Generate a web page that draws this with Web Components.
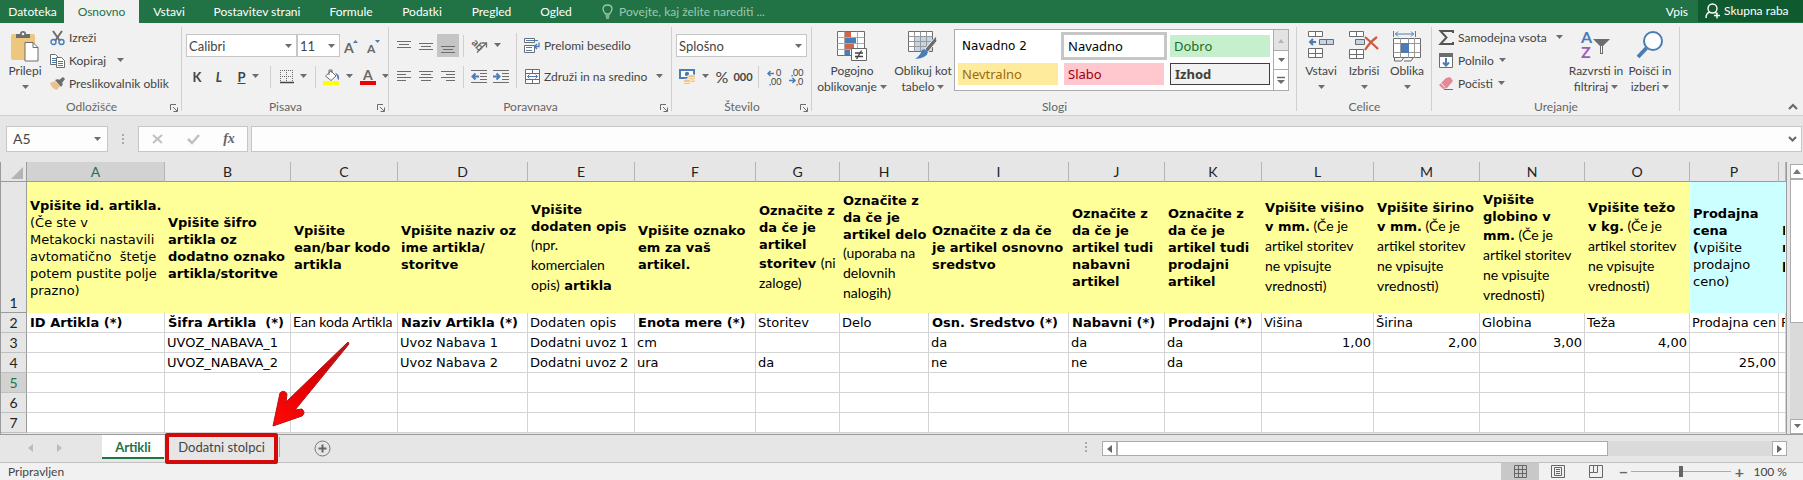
<!DOCTYPE html>
<html lang="sl">
<head>
<meta charset="utf-8">
<title>Artikli</title>
<style>
html,body{margin:0;height:100%}
body{font:12px/16px Lato,"Noto Sans",sans-serif;color:#444;background:#e6e6e6;overflow:hidden}
</style>
</head>
<body>
<sheet-app></sheet-app>
<script>
const G='#6d6d6d',B='#4a7db5';
const lines=(w,a)=>a.map(([x,y,l])=>`<path d="M${x} ${y}.5h${l}" stroke="${G}"/>`).join('');
const ICONS={
 down:[8,5,`<path d="M1 0h7L4.500 4z" fill="${G}"/>`],
 up:[8,5,`<path d="M1 5h6L4 1z" fill="#b5b5b5"/>`],
 more:[10,9,`<path d="M1 1.500h8" stroke="${G}" stroke-width="1.500"/><path d="M1 4h8L5 8z" fill="${G}"/>`],
 paste:[28,31,`<rect y="3" width="24" height="26" rx="2" fill="#edc77d"/><path d="M5 7V3h4q0-3 3-3t3 3h4v4z" fill="#6d6d6d"/><circle cx="12" cy="3" r="1.300" fill="#f1f1f1"/><path d="M14 11.500h8l5 5V30H14z" fill="#fff" stroke="${G}"/><path d="M22 11.500v5h5" fill="none" stroke="${G}"/>`],
 cut:[15,16,`<path d="M3 1l7 10M12 1L5 11" stroke="${G}" stroke-width="2"/><circle cx="3.500" cy="12" r="2.500" fill="none" stroke="${B}" stroke-width="1.400"/><circle cx="11.500" cy="12" r="2.500" fill="none" stroke="${B}" stroke-width="1.400"/>`],
 copy:[15,14,`<path d="M.5.500h5l3 3v7h-8z" fill="#fff" stroke="${G}"/><path d="M2 4.500h4M2 6.500h4M2 8.500h4" stroke="${B}"/><path d="M6.500 3.500h5l3 3v7h-8z" fill="#fff" stroke="${G}"/><path d="M8 7.500h5M8 9.500h5M8 11.500h5" stroke="${B}"/>`],
 brush:[16,14,`<path d="M1 6l5-2 5 5-3 4Q3 12 1 6z" fill="#edc08a"/><path d="M6 3l3-1 1 1 4-3 2 2-3 4 1 1-2 3z" fill="${G}"/>`],
 biga:[14,14,`<path d="M9 4h5l-2.500-3z" fill="${B}"/><text x="0" y="14" font-size="14" font-weight="700" fill="#666">A</text>`],
 smalla:[14,14,`<path d="M9 1h5l-2.500 3z" fill="${B}"/><text x="1" y="14" font-size="12" font-weight="700" fill="#666">A</text>`],
 borders:[14,14,`<path d="M.5 0v13M6.500 0v13M12.500 0v13M0 .5h13M0 6.500h13" stroke="${G}" stroke-dasharray="1 1" fill="none"/><path d="M0 12.500h14" stroke="#444" stroke-width="1.500"/>`],
 fill:[17,16,`<rect y="12" width="16" height="4" fill="#ff0"/><path d="M2.500 7L8 2l5 5-5 4.500z" fill="#fff" stroke="${G}"/><path d="M6 6V1h3v3" fill="none" stroke="${G}"/><path d="M12 4q5 1 4 7-2-1-2-4z" fill="${B}"/>`],
 fontcolor:[16,16,`<rect y="12" width="16" height="4" fill="#f00000"/><text x="3" y="11" font-size="14" font-weight="700" fill="#666">A</text>`],
 vtop:[14,14,lines(14,[[0,2,14],[2,5,10],[0,8,14]])],
 vmid:[14,14,lines(14,[[0,4,14],[2,7,10],[0,10,14]])],
 vbot:[14,14,lines(14,[[0,7,14],[2,10,10],[0,13,14]])],
 hl:[14,12,lines(14,[[0,0,14],[0,3,9],[0,6,14],[0,9,9]])],
 hc:[14,12,lines(14,[[0,0,14],[2,3,10],[0,6,14],[2,9,10]])],
 hr:[14,12,lines(14,[[0,0,14],[5,3,9],[0,6,14],[5,9,9]])],
 orient:[17,15,`<text transform="rotate(45 2 6)" x="0" y="7" font-size="11" font-weight="700" fill="#666">ab</text><path d="M6 14.500L15 5.500M11 5h4.500v4.500" fill="none" stroke="${G}" stroke-width="1.300"/>`],
 outdent:[16,13,lines(16,[[0,0,16],[9,3,7],[9,6,7],[9,9,7],[0,12,16]])+`<path d="M8 6.500H2M4.500 3.500l-3 3 3 3" stroke="${B}" stroke-width="2" fill="none"/>`],
 indent:[16,13,lines(16,[[0,0,16],[9,3,7],[9,6,7],[9,9,7],[0,12,16]])+`<path d="M0 6.500h6M3.500 3.500l3 3-3 3" stroke="${B}" stroke-width="2" fill="none"/>`],
 wrap:[16,15,`<path d="M.5.500h10v4H.5zM.5 7.500h10v7H.5z" fill="#fff" stroke="${G}"/><path d="M2 2.500h12M2 9.500h6M2 12.500h6" stroke="${B}"/><path d="M15 4.500v4h-4M13 6l-2.500 2.500L13 11" stroke="${B}" stroke-width="1.300" fill="none"/>`],
 merge:[15,15,`<path d="M.5.500h14v14H.5zM.5 4.500h14M.5 10.500h14M7.500.5v4M7.500 10.500v4" fill="#fff" stroke="${G}"/><path d="M2.500 7.500h10M4.500 5.500l-2 2 2 2M10.500 5.500l2 2-2 2" stroke="${B}" fill="none"/>`],
 money:[17,16,`<path d="M1 1h14v8H1z" fill="#fff" stroke="${B}" stroke-width="2"/><circle cx="8" cy="5" r="2.200" fill="${B}"/><g fill="#edc78a" stroke="#fff" stroke-width=".7"><ellipse cx="12.500" cy="12" rx="4" ry="1.800"/><ellipse cx="12.500" cy="9.500" rx="4" ry="1.800"/><ellipse cx="12.500" cy="7.300" rx="4" ry="1.800"/><ellipse cx="8" cy="14" rx="4" ry="1.800"/><ellipse cx="8" cy="11.800" rx="4" ry="1.800"/></g>`],
 decinc:[15,16,`<path d="M7 4.500H1M3.500 2l-2.500 2.500L3.500 7" stroke="${B}" stroke-width="1.500" fill="none"/><text x="9" y="7" font-size="9" fill="#444">0</text><text x="2" y="16" font-size="9" fill="#444">,00</text>`],
 decdec:[15,16,`<path d="M0 11.500h6M3.500 9l2.500 2.500L3.500 14" stroke="${B}" stroke-width="1.500" fill="none"/><text x="2" y="7" font-size="9" fill="#444">,00</text><text x="7" y="16" font-size="9" fill="#444">,0</text>`],
 cond:[30,30,`<path d="M.5.500h27v24H.5z" fill="#fff" stroke="${G}"/><path d="M.5 6.500h27M.5 12.500h27M.5 18.500h27M7.500.5v24M20.500.5v24" stroke="#aaa"/><path d="M8 1h6v5H8zM8 13h9v5H8z" fill="#d0654a"/><path d="M8 7h11v5H8zM8 19h5v5H8z" fill="${B}"/><path d="M14.500 17.500h15v12h-15z" fill="#fff" stroke="#666"/><path d="M18 22h8M18 25.500h8M24.500 19.500l-5 8.500" stroke="#444" stroke-width="1.300"/>`],
 table:[30,29,`<path d="M.5.500h24v20H.5z" fill="#fff" stroke="${G}"/><path d="M7 6h17v14H7z" fill="#c3d6e8"/><path d="M.5 5.500h24M.5 10.500h24M.5 15.500h24M6.500.5v20M12.500.5v20M18.500.5v20" stroke="#999"/><path d="M28 5L17 18l3 3 9-11z" fill="${G}" stroke="#f1f1f1"/><path d="M14 19q4-2 6 2-1 6-13 7 5-3 7-9z" fill="${B}"/>`],
 insert:[27,28,`<path d="M.5.500h14v5H.5zM7.500.5v5M.5 17.500h14v9H.5zM7.500 17.500v9M.5 22.500h14" fill="#fff" stroke="${G}"/><path d="M11.500 8.500h14v5h-14zM18.500 8.500v5" fill="#c3d6e8" stroke="${G}"/><path d="M8 11H2M5 8l-3 3 3 3" stroke="${B}" stroke-width="2" fill="none"/>`],
 del:[30,28,`<path d="M.5.500h14v5H.5zM7.500.5v5M.5 18.500h14v9H.5zM7.500 18.500v9M.5 23.500h14" fill="#fff" stroke="${G}"/><path d="M6.500 8.500h9v5h-9z" fill="#c3d6e8" stroke="${G}"/><path d="M16 6q6 5 13 12M28 6q-7 5-12 13" stroke="#d0583c" stroke-width="2.200" fill="none"/>`],
 format:[29,31,`<path d="M.5 0v6M22.500 0v6M2 3h19M5 .5L2.500 3 5 5.500M18 .5L20.500 3 18 5.500" stroke="${B}" fill="none"/><path d="M.5 7.500h27v19H.5z" fill="#fff" stroke="${G}"/><path d="M.5 12.500h27M.5 21.500h27M7.500 7v20M15.500 7v20M21.500 7v20" stroke="#999"/><path d="M8 12h8v10H8z" fill="${B}"/><path d="M1.500 27v3h7l2-3M11 30h7l2-3" stroke="${G}" fill="none"/>`],
 sum:[15,15,`<path d="M14 3V1H1.500l6 6.500-6 6.500H14v-2" fill="none" stroke="#555" stroke-width="2"/>`],
 filldown:[14,15,`<path d="M.5.500h13v14H.5z" fill="#fff" stroke="${G}"/><path d="M0 0h14v4H0z" fill="${G}"/><path d="M7 5v7M4 9.500l3 3 3-3" stroke="${B}" stroke-width="2" fill="none"/>`],
 eraser:[15,13,`<path d="M7 1l4-1 3 4-6 7-4 1-4-4z" fill="#e58797"/><path d="M2 6l4 4.500" stroke="#f1f1f1"/><path d="M5 12.500h9" stroke="${G}"/>`],
 sort:[30,28,`<text x="0" y="12" font-size="16" font-weight="700" fill="${B}">A</text><text x="0" y="27" font-size="16" font-weight="700" fill="#9a5fb5">Z</text><path d="M12 8h17l-7 7v8h-3v-8z" fill="${G}"/><path d="M20.500 15v7" stroke="#fff"/>`],
 find:[28,28,`<circle cx="17" cy="10" r="9" fill="#fff" stroke="${B}" stroke-width="2"/><path d="M10.500 17L2 26" stroke="${B}" stroke-width="4"/>`],
 launch:[8,8,`<path d="M.5 6V.5H6M3 3l4 4M7.500 3.500v4h-4" fill="none" stroke="${G}"/>`],
 bulb:[11,15,`<path d="M3.500 10Q1 7 1 5q0-4 4.500-4T10 5q0 2-2.500 5zM3.500 12h4M4 14h3" fill="none" stroke="#9cc9ae" stroke-width="1.300"/>`],
 person:[15,16,`<circle cx="7.500" cy="5.500" r="4.500" fill="none" stroke="#fff" stroke-width="1.400"/><path d="M1 15q0-5 4-6M10 9l1.500 1.500M9 12.500h6M12 9.500v6" fill="none" stroke="#fff" stroke-width="1.400"/>`],
 collapse:[10,6,`<path d="M1 5l4-4 4 4" fill="none" stroke="#666" stroke-width="2"/>`],
 expand:[9,6,`<path d="M1 1l3.500 3.500L8 1" fill="none" stroke="#666" stroke-width="2"/>`],
 dots:[2,10,`<path d="M0 0h2v2H0zM0 4h2v2H0zM0 8h2v2H0z" fill="#aaa"/>`],
 cancel:[11,10,`<path d="M1 1l9 8M10 1L1 9" stroke="#c0c0c0" stroke-width="2"/>`],
 ok:[13,10,`<path d="M1 5l4 4 7-8" fill="none" stroke="#c0c0c0" stroke-width="2.500"/>`],
 corner:[12,12,`<path d="M12 0v12H0z" fill="#b4b4b4"/>`],
 left:[5,8,`<path d="M5 0v8L0 4z" fill="currentColor"/>`],
 right:[5,8,`<path d="M0 0v8l5-4z" fill="currentColor"/>`],
 scrup:[8,5,`<path d="M0 5h8L4 0z" fill="#777"/>`],
 plus:[17,17,`<circle cx="8.500" cy="8.500" r="7.500" fill="none" stroke="#777"/><path d="M8.500 4.500v8M4.500 8.500h8" stroke="#666" stroke-width="2"/>`],
 vgrid:[13,13,`<path d="M.5.500h12v12H.5zM.5 4.500h12M.5 8.500h12M4.500.5v12M8.500.5v12" fill="none" stroke="#666"/>`],
 vpage:[14,13,`<path d="M.5.500h13v12H.5zM3.500 2.500h7v8h-7zM5 4.500h4M5 6.500h4M5 8.500h4" fill="none" stroke="#666"/>`],
 vbreak:[14,13,`<path d="M.5.500h13v12H.5zM4.500.5v7M8.500.5v7h-4M.5 7.500h4" fill="none" stroke="#666"/>`],
 arrow:[80,88,`<defs><linearGradient id="g" x1="0" y1="1" x2="1" y2="0"><stop offset="0" stop-color="#ff0a0a"/><stop offset=".5" stop-color="#e30000"/><stop offset="1" stop-color="#b01818"/></linearGradient></defs><path d="M77 2l-62 60 1-8q-3-5-7-1L2 86l29-10q4-3 0-7l-7 1L78 4z" fill="url(#g)" stroke="#b51515" stroke-linejoin="round"/>`]
};
const define=(n,tpl,after)=>customElements.define(n,class extends HTMLElement{
 connectedCallback(){if(this.shadowRoot)return;const r=this.attachShadow({mode:'open'});const t=document.createElement('template');t.innerHTML=tpl(this);r.append(t.content.cloneNode(true));if(after)after(this,r)}
});
const at=(e,n,d='')=>e.getAttribute(n)??d;
const BTN='button{all:unset;box-sizing:border-box;cursor:default;font:inherit;color:inherit}';

define('ui-icon',e=>{const [w,h,s]=ICONS[at(e,'name')];return `<style>:host{display:block;flex:none}svg{display:block;overflow:visible}</style><svg width="${w}" height="${h}" viewBox="0 0 ${w} ${h}" aria-hidden="true">${s}</svg>`});

define('ribbon-tab',e=>`<style>:host{display:flex;flex:none;width:var(--w)}${BTN}
button{width:100%;text-align:center;color:#fff;height:23px;line-height:23px}
button[aria-selected=true]{background:#f1f1f1;color:#217346}</style><button role="tab" aria-selected="${e.hasAttribute('on')}"><slot></slot></button>`,
e=>e.style.setProperty('--w',at(e,'w')+'px'));

/* A titled ribbon section with a separator on its right. */
define('ribbon-group',e=>`<style>:host{display:grid;grid-template-rows:76px 16px;flex:none;box-sizing:border-box;width:var(--w);position:relative;color:#444}
:host::after{content:"";position:absolute;right:0;top:4px;bottom:4px;width:1px;background:#d0d0d0}
.c{display:flex;min-width:0}.l{display:flex;align-items:center;justify-content:center;color:#666;position:relative}
${BTN}button{position:absolute;right:4px;top:5px}</style>
<div class="c"><slot></slot></div><div class="l">${at(e,'label')}${e.hasAttribute('launch')?`<button aria-label="${at(e,'label')}"><ui-icon name="launch"></ui-icon></button>`:''}</div>`,
e=>e.style.setProperty('--w',at(e,'w')+'px'));

/* Large command: picture above a one- or two-line caption. */
define('big-button',e=>{const l=at(e,'label').split('|');const a='<ui-icon name="down"></ui-icon>';
return `<style>:host{display:block;flex:none;width:var(--w)}${BTN}
button{width:100%;display:flex;flex-direction:column;align-items:center;white-space:nowrap;padding-top:8px}
.i{height:32px}span{display:flex;align-items:center;gap:2px;height:16px}</style>
<button><div class="i"><ui-icon name="${at(e,'icon')}"></ui-icon></div><span>${l[0]}</span><span>${l[1]||''}${a}</span></button>`},
e=>e.style.setProperty('--w',at(e,'w')+'px'));

/* Small command: optional picture, caption and menu arrow in one line. */
define('cmd-button',e=>`<style>:host{display:flex;flex:none}${BTN}
button{display:flex;align-items:center;white-space:nowrap;height:23px;gap:4px}
.i{width:16px;display:flex;justify-content:center}.a{margin-left:var(--gap,0)}</style>
<button><span class="i"><ui-icon name="${at(e,'icon')}"></ui-icon></span><slot></slot>${e.hasAttribute('menu')?'<ui-icon class="a" name="down"></ui-icon>':''}</button>`);

define('icon-button',e=>`<style>:host{display:flex;flex:none}${BTN}
button{display:flex;align-items:center;justify-content:center;width:22px;height:23px}
:host([on]) button{background:#c5c5c5}:host([menu]) button{width:36px;gap:5px}:host([narrow]) button{width:20px}</style>
<button aria-label="${at(e,'label')}">${at(e,'icon')?`<ui-icon name="${at(e,'icon')}"></ui-icon>`:'<slot></slot>'}${e.hasAttribute('menu')?'<ui-icon name="down"></ui-icon>':''}</button>`);

define('combo-box',e=>`<style>:host{display:flex;flex:none;position:relative;width:var(--w)}
select{appearance:none;width:100%;height:23px;border:1px solid #c6c6c6;border-radius:0;background:#fff;color:#444;font:13px/20px Lato,sans-serif;padding:0 2px;outline:0;margin:0}
ui-icon{position:absolute;right:5px;top:10px;pointer-events:none}</style>
<select aria-label="${at(e,'label')}"><option>${at(e,'value')}</option></select><ui-icon name="down"></ui-icon>`,
e=>e.style.setProperty('--w',at(e,'w')+'px'));

define('v-rule',()=>`<style>:host{display:block;flex:none;width:1px;height:22px;background:#d0d0d0}</style>`);

define('style-gallery',()=>`<style>:host{display:flex;flex:none;height:62px;width:335px;box-sizing:border-box;border:1px solid #ababab;background:#fff;margin-top:6px}
${BTN}.g{flex:1;display:grid;grid-template-columns:repeat(3,100px);grid-template-rows:22px 22px;gap:6px;padding:5px 0 0 3px}
.g button{font:13px/22px "Noto Sans",sans-serif;padding-left:4px;color:#000}
.on{outline:3px solid #c6c6c6}.s{display:grid;grid-template-rows:20px 19px 21px;width:15px}
.s button{border-left:1px solid #ababab;display:flex;align-items:center;justify-content:center}.s button+button{border-top:1px solid #ababab}
.g .good{background:#c6efce;color:#1c6b1c}.g .neu{background:#ffeb9c;color:#9c6a10}.g .bad{background:#ffc7ce;color:#9c0006}.g .out{background:#f2f2f2;color:#3f3f3f;border:1px solid #3f3f3f;font-weight:700;line-height:20px}
.g .v{font:12px/22px "DejaVu Sans",sans-serif}.d{background:#e3e3e3}</style>
<div class="g"><button class="v">Navadno 2</button><button class="on">Navadno</button><button class="good">Dobro</button><button class="neu">Nevtralno</button><button class="bad">Slabo</button><button class="out">Izhod</button></div>
<div class="s"><button class="d" aria-label="Gor"><ui-icon name="up"></ui-icon></button><button aria-label="Dol"><ui-icon name="down"></ui-icon></button><button aria-label="Več"><ui-icon name="more"></ui-icon></button></div>`);

define('app-tabs',()=>`<style>:host{display:flex;height:23px;background:#217346;color:#fff;align-items:center;padding-left:1px}
${BTN}label{display:flex;align-items:center;gap:6px;margin-left:16px;flex:1}input{all:unset;flex:1;font:inherit;color:#9cc9ae}input::placeholder{color:#9cc9ae;opacity:1}
.in{margin-right:10px}.share{background:#0f5b2f;height:22px;align-self:flex-start;width:105px;display:flex;align-items:center;gap:4px;padding-left:7px}</style>
<ribbon-tab w="63">Datoteka</ribbon-tab><ribbon-tab w="75" on>Osnovno</ribbon-tab><ribbon-tab w="60">Vstavi</ribbon-tab><ribbon-tab w="116">Postavitev strani</ribbon-tab><ribbon-tab w="72">Formule</ribbon-tab><ribbon-tab w="70">Podatki</ribbon-tab><ribbon-tab w="69">Pregled</ribbon-tab><ribbon-tab w="60">Ogled</ribbon-tab>
<label><ui-icon name="bulb"></ui-icon><input aria-label="Povejte" placeholder="Povejte, kaj želite narediti ..."></label>
<button class="in">Vpis</button><button class="share"><ui-icon name="person"></ui-icon>Skupna raba</button>`);

define('app-ribbon',()=>`<style>:host{display:flex;height:92px;background:#f1f1f1;border-bottom:1px solid #d0d0d0;padding-left:1px;position:relative}
.col{display:flex;flex-direction:column}.row{display:flex;align-items:center;height:23px}.three{padding:3px 0 0 8px}
.two{gap:8px;padding:11px 0 0 4px}.b{font:700 13px/16px Lato,sans-serif}.i{font-style:italic}.u{text-decoration:underline}
v-rule{margin:0 4px}.tall{height:55px;margin:10px 7px 0 4px}${BTN}.end{position:absolute;right:5px;bottom:5px}
.flush{padding-left:0}.sums{padding-left:6px;width:134px;box-sizing:border-box}.pct{font-size:16px}.tho{font:700 11px/16px Lato,sans-serif}</style>
<ribbon-group w="181" label="Odložišče" launch><big-button w="48" icon="paste" label="Prilepi"></big-button>
<div class="col three flush"><cmd-button icon="cut">Izreži</cmd-button><cmd-button icon="copy" menu style="--gap:6px">Kopiraj</cmd-button><cmd-button icon="brush">Preslikovalnik oblik</cmd-button></div></ribbon-group>
<ribbon-group w="207" label="Pisava" launch><div class="col two">
<div class="row"><combo-box w="111" label="Pisava" value="Calibri"></combo-box><combo-box w="43" label="Velikost" value="11"></combo-box><icon-button icon="biga" label="Povečaj"></icon-button><icon-button icon="smalla" label="Pomanjšaj"></icon-button></div>
<div class="row"><icon-button label="Krepko"><span class="b">K</span></icon-button><icon-button label="Ležeče"><span class="b i">L</span></icon-button><icon-button menu label="Podčrtano"><span class="b u">P</span></icon-button><v-rule></v-rule><icon-button icon="borders" menu label="Obrobe"></icon-button><v-rule></v-rule><icon-button icon="fill" menu label="Polnilo"></icon-button><icon-button icon="fontcolor" menu label="Barva"></icon-button></div></div></ribbon-group>
<ribbon-group w="283" label="Poravnava" launch><div class="col two">
<div class="row"><icon-button icon="vtop" label="Zgoraj"></icon-button><icon-button icon="vmid" label="Sredina"></icon-button><icon-button icon="vbot" on label="Spodaj"></icon-button><v-rule></v-rule><icon-button icon="orient" menu label="Usmerjenost"></icon-button></div>
<div class="row"><icon-button icon="hl" label="Levo"></icon-button><icon-button icon="hc" label="Središče"></icon-button><icon-button icon="hr" label="Desno"></icon-button><v-rule></v-rule><icon-button icon="outdent" label="Manj zamika"></icon-button><icon-button icon="indent" label="Več zamika"></icon-button></div></div>
<v-rule class="tall"></v-rule>
<div class="col two flush"><cmd-button icon="wrap">Prelomi besedilo</cmd-button><cmd-button icon="merge" menu style="--gap:4px">Združi in na sredino</cmd-button></div></ribbon-group>
<ribbon-group w="140" label="Število" launch><div class="col two">
<div class="row"><combo-box w="131" label="Oblika" value="Splošno"></combo-box></div>
<div class="row"><icon-button icon="money" menu label="Valuta"></icon-button><icon-button narrow label="Odstotek"><span class="pct">%</span></icon-button><icon-button label="Tisočice"><span class="tho">000</span></icon-button><v-rule></v-rule><icon-button icon="decinc" label="Več decimalk"></icon-button><icon-button icon="decdec" label="Manj decimalk"></icon-button></div></div></ribbon-group>
<ribbon-group w="485" label="Slogi"><big-button w="80" icon="cond" label="Pogojno|oblikovanje"></big-button><big-button w="62" icon="table" label="Oblikuj kot|tabelo"></big-button><style-gallery></style-gallery></ribbon-group>
<ribbon-group w="135" label="Celice"><big-button w="48" icon="insert" label="Vstavi"></big-button><big-button w="38" icon="del" label="Izbriši"></big-button><big-button w="48" icon="format" label="Oblika"></big-button></ribbon-group>
<ribbon-group w="248" label="Urejanje"><div class="col three sums"><cmd-button icon="sum" menu style="--gap:4px">Samodejna vsota</cmd-button><cmd-button icon="filldown" menu>Polnilo</cmd-button><cmd-button icon="eraser" menu>Počisti</cmd-button></div><big-button w="60" icon="sort" label="Razvrsti in|filtriraj"></big-button><big-button w="48" icon="find" label="Poišči in|izberi"></big-button></ribbon-group>
<button class="end" aria-label="Strni trak"><ui-icon name="collapse"></ui-icon></button>`);

define('formula-bar',()=>`<style>:host{display:flex;align-items:center;padding:10px 0 10px 6px;background:#e6e6e6;position:relative}
.n,.f,.x{box-sizing:border-box;height:26px;border:1px solid #c6c6c6;background:#fdfdfd}
.n{width:102px;display:flex;align-items:center;padding:0 6px}.n input{all:unset;width:76px;font:14px/20px Lato,sans-serif}
.d{margin:0 14px}.x{width:110px;display:grid;grid-template-columns:1fr 1fr 1fr;align-items:center;margin-right:3px}
${BTN}.n button{margin-left:4px}.x button{display:flex;justify-content:center;font:italic 700 14px/20px "Liberation Serif",serif;color:#666}
.f{flex:1;display:flex;align-items:center;padding-right:4px;margin-right:1px}.f input{all:unset;flex:1}</style>
<div class="n"><input aria-label="Polje z imenom" value="A5"><button aria-label="Imena"><ui-icon name="down"></ui-icon></button></div><ui-icon class="d" name="dots"></ui-icon>
<div class="x"><button aria-label="Prekliči"><ui-icon name="cancel"></ui-icon></button><button aria-label="Vnesi"><ui-icon name="ok"></ui-icon></button><button>fx</button></div>
<div class="f"><input aria-label="Vnosna vrstica"><button aria-label="Razširi"><ui-icon name="expand"></ui-icon></button></div>`);

const COLS=[138,126,107,130,107,121,84,89,140,96,97,112,106,105,105,89];
const c=s=>`<i>${s}</i>`;
const dims=(a,b)=>`${a}<br>${b}${c(' (Če je')}<br>${c('artikel storitev')}<br>${c('ne vpisujte')}<br>${c('vrednosti)')}`;
const HEAD=['Vpišite id. artikla.<br><s>(Če ste v<br>Metakocki nastavili<br>avtomatično&nbsp; štetje<br>potem pustite polje<br>prazno)</s>','Vpišite šifro<br>artikla oz<br>dodatno oznako<br>artikla/storitve','Vpišite<br>ean/bar kodo<br>artikla','Vpišite naziv oz<br>ime artikla/<br>storitve',`Vpišite<br>dodaten opis<br>${c('(npr.')}<br>${c('komercialen')}<br>${c('opis)')} artikla`,'Vpišite oznako<br>em za vaš<br>artikel.',`Označite z<br>da če je<br>artikel<br>storitev ${c('(ni')}<br>${c('zaloge)')}`,`Označite z<br>da če je<br>artikel delo<br>${c('(uporaba na')}<br>${c('delovnih')}<br>${c('nalogih)')}`,'Označite z da če<br>je artikel osnovno<br>sredstvo','Označite z<br>da če je<br>artikel tudi<br>nabavni<br>artikel','Označite z<br>da če je<br>artikel tudi<br>prodajni<br>artikel',dims('Vpišite višino','v mm.'),dims('Vpišite širino','v mm.'),dims('Vpišite<br>globino v','mm.'),dims('Vpišite težo','v kg.'),'Prodajna<br>cena<br>(<s>vpišite<br>prodajno<br>ceno)</s>','P<br>n<br>p'];
const ROWS=[['<b>ID Artikla (*)</b>','<b>Šifra Artikla&nbsp; (*)</b>',c('Ean koda Artikla'),'<b>Naziv Artikla (*)</b>','Dodaten opis','<b>Enota mere (*)</b>','Storitev','Delo','<b>Osn. Sredstvo (*)</b>','<b>Nabavni (*)</b>','<b>Prodajni (*)</b>','Višina','Širina','Globina','Teža','Prodajna cen','P'],
['','UVOZ_NABAVA_1','','Uvoz Nabava 1','Dodatni uvoz 1','cm','','','da','da','da','1,00','2,00','3,00','4,00','',''],
['','UVOZ_NABAVA_2','','Uvoz Nabava 2','Dodatni uvoz 2','ura','da','','ne','ne','da','','','','','25,00',''],[],[],[]];
define('sheet-grid',()=>`<style>:host{display:block;flex:1;min-width:0;overflow:hidden;border-right:1px solid #9b9b9b;border-left:1px solid #9b9b9b}
table{border-collapse:separate;border-spacing:0;table-layout:fixed;width:100%;font:13px/17px "DejaVu Sans",sans-serif;color:#000}
th,td{box-sizing:border-box;padding:0 0 0 2px;white-space:nowrap;overflow:hidden;text-align:left}
td{border-right:1px solid #d4d4d4;border-bottom:1px solid #d4d4d4;height:20px;background:#fff;line-height:19px}
td.r{text-align:right;padding-right:2px}
thead th{height:20px;background:#e6e6e6;border-bottom:1px solid #9b9b9b;border-right:1px solid #b5b5b5;font:14px/19px Lato,sans-serif;text-align:center;color:#222;padding:0}
tbody th{background:#e6e6e6;border-right:1px solid #9b9b9b;border-bottom:1px solid #c0c0c0;text-align:center;padding:0;font:14px/19px Lato,sans-serif;color:#222;vertical-align:bottom}
thead .sel,tbody th.sel{background:#d2d2d2;color:#217346}thead th:first-child{border-right-color:#9b9b9b}thead th:first-child ui-icon{margin:3px 0 0 10px}
.h td{height:131px;background:#ff9;border-color:#ff9;border-bottom:0;font-weight:700;line-height:17px;padding-left:3px}.h td.p{background:#cff;border-color:#cff}.h th{border-bottom-color:#9b9b9b}b{padding-left:1px}
i{font:14px/20px Lato,sans-serif}tr:not(.h) i{line-height:17px}s{text-decoration:none;font-weight:400}</style>
<table><colgroup><col style="width:26px">${COLS.map(w=>`<col style="width:${w}px">`).join('')}<col></colgroup>
<thead><tr><th><ui-icon name="corner"></ui-icon></th>${COLS.map((_,i)=>`<th class="${i?'':'sel'}">${String.fromCharCode(65+i)}</th>`).join('')}<th></th></tr></thead>
<tbody><tr class="h"><th>1</th>${HEAD.map((t,i)=>`<td class="${i>14?'p':''}">${t}</td>`).join('')}</tr>
${ROWS.map((r,n)=>`<tr><th class="${n==3?'sel':''}">${n+2}</th>${HEAD.map((_,i)=>`<td class="${/^\d/.test(r[i]||'')?'r':''}">${r[i]||''}</td>`).join('')}</tr>`).join('')}</tbody></table>`);

define('v-scroll',()=>`<style>:host{display:flex;flex-direction:column;width:13px;margin:2px 0 0 3px;background:#dadada}
${BTN}button,.t{box-sizing:border-box;border:1px solid #ababab;border-right:0;background:#fff}button{height:15px;display:flex;align-items:center;justify-content:center}.t{height:144px}.g{flex:1}</style>
<button aria-label="Gor"><ui-icon name="scrup"></ui-icon></button><div class="t"></div><div class="g"></div><button aria-label="Dol"><ui-icon name="down"></ui-icon></button>`);

define('sheet-tabs',()=>`<style>:host{display:flex;height:27px;background:#e6e6e6;border-top:1px solid #9b9b9b;border-bottom:1px solid #c0c0c0;padding-right:16px;align-items:flex-start;font-size:13px;position:relative;z-index:2}
${BTN}.nav{display:flex;gap:24px;padding:9px 0 0 28px;width:74px;box-sizing:content-box;color:#bcbcbc}
.tab{height:24px;width:62px;text-align:center;line-height:24px}.on{background:#fff;color:#217346;font-weight:700;border-bottom:2px solid #217346}
.two{width:116px;border-right:1px solid #ababab;position:relative;height:20px;margin-top:2px;line-height:20px}
.box{position:absolute;left:1px;top:-4px;width:113px;height:31px;box-sizing:border-box;border:4px solid #d40a0a;border-radius:2px}
.ar{position:absolute;left:107px;top:-97px}.plus{margin:5px 0 0 34px}.sp{flex:1}.dots{margin:7px 15px 0 0}
.hs{display:flex;flex:0 1 685px;height:15px;margin-top:6px;background:#dadada}.hs>*{box-sizing:border-box;border:1px solid #ababab;background:#fff}.hs button{width:15px;display:flex;align-items:center;justify-content:center;color:#666}.th{width:491px}.hs .g{flex:1;border:0;background:none}</style>
<div class="nav"><ui-icon name="left"></ui-icon><ui-icon name="right"></ui-icon></div><button class="tab on">Artikli</button><button class="tab two">Dodatni stolpci<span class="box"></span><ui-icon class="ar" name="arrow"></ui-icon></button>
<button class="plus" aria-label="Nov list"><ui-icon name="plus"></ui-icon></button><div class="sp"></div><ui-icon class="dots" name="dots"></ui-icon>
<div class="hs"><button aria-label="Levo"><ui-icon name="left"></ui-icon></button><div class="th"></div><div class="g"></div><button aria-label="Desno"><ui-icon name="right"></ui-icon></button></div>`);

define('status-bar',()=>`<style>:host{display:flex;height:17px;align-items:center;background:#f1f1f1;padding:0 16px 0 8px;color:#444}
.sp{flex:1}${BTN}button{height:17px;width:38px;display:flex;align-items:center;justify-content:center}.on{background:#c8c8c8}.z{width:16px;font:700 16px/16px Lato,sans-serif;color:#666}
input{appearance:none;width:100px;height:17px;margin:0;background:linear-gradient(#aaa,#aaa) center/100% 1px no-repeat}
input::-webkit-slider-thumb{appearance:none;width:4px;height:11px;background:#666}.o{margin-left:6px}</style>
<span>Pripravljen</span><div class="sp"></div><button class="on" aria-label="Navadno"><ui-icon name="vgrid"></ui-icon></button><button aria-label="Postavitev strani"><ui-icon name="vpage"></ui-icon></button><button aria-label="Prelomi strani"><ui-icon name="vbreak"></ui-icon></button>
<button class="z" aria-label="Pomanjšaj">−</button><input type="range" aria-label="Povečava" value="50"><button class="z" aria-label="Povečaj">+</button><span class="o">100 %</span>`);

define('sheet-app',()=>`<style>:host{display:flex;flex-direction:column;min-height:100vh;background:#e6e6e6}.s{display:flex;flex:1 0 272px;height:272px}</style>
<app-tabs></app-tabs><app-ribbon></app-ribbon><formula-bar></formula-bar><div class="s"><sheet-grid></sheet-grid><v-scroll></v-scroll></div><sheet-tabs></sheet-tabs><status-bar></status-bar>`);
</script>
</body>
</html>
